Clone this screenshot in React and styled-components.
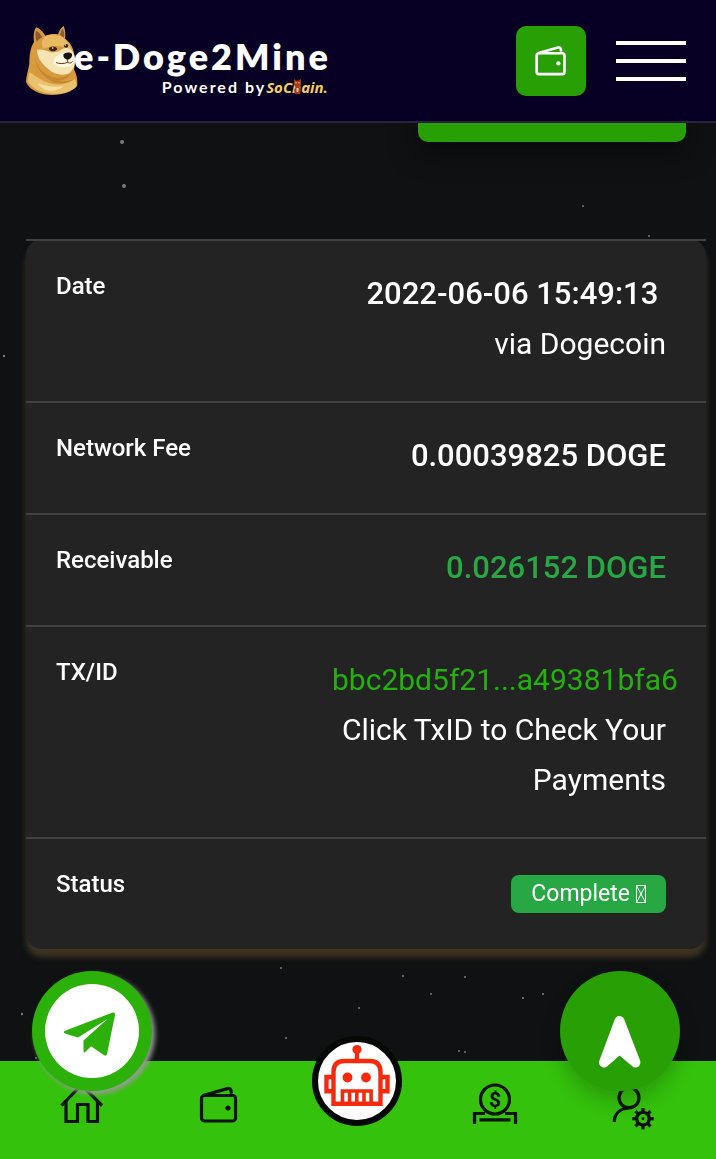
import styled, { createGlobalStyle, css } from 'styled-components';

const GlobalStyle = createGlobalStyle`
  * {
    box-sizing: border-box;
  }

  body {
    margin: 0;
    background-color: #0f1112;
    color: #fff;
    font-family: Roboto, "Open Sans", sans-serif;
  }

  button {
    border: 0;
    padding: 0;
    font: inherit;
    cursor: pointer;
  }
`;

const StarField = styled.svg`
  position: fixed;
  inset: 0;
  width: 100%;
  height: 100%;
  z-index: -1;
`;

const Header = styled.header`
  position: fixed;
  top: 0;
  left: 0;
  right: 0;
  height: 123px;
  padding: 0 30px 0 26px;
  display: flex;
  align-items: center;
  gap: 30px;
  background-color: #070024;
  border-bottom: 2px solid #28223f;
  z-index: 40;
`;

const Brand = styled.a`
  display: flex;
  align-items: center;
  margin-right: auto;
  color: #fff;
  text-decoration: none;
`;

const DogeHead = styled.svg`
  width: 52px;
  height: 70px;
`;

const Wordmark = styled.span`
  display: flex;
  flex-direction: column;
  align-items: flex-end;
  margin-left: -4px;
  padding-top: 10px;
  font-family: Lato, sans-serif;
  font-weight: 700;
`;

const BrandName = styled.span`
  font-size: 36px;
  line-height: 42px;
  font-weight: 800;
  letter-spacing: 3px;
`;

const Tagline = styled.span`
  display: flex;
  padding-right: 3px;
  font-size: 16px;
  line-height: 20px;
  letter-spacing: 2px;
`;

const Partner = styled.span`
  position: relative;
  color: #f0d060;
  font-family: "Open Sans", sans-serif;
  font-size: 15px;
  font-style: italic;
  letter-spacing: 0;
`;

const PartnerCat = styled.svg`
  position: absolute;
  left: 27px;
  top: 1px;
  width: 9px;
  height: 17px;
`;

const WalletButton = styled.button`
  width: 70px;
  height: 70px;
  display: flex;
  align-items: center;
  justify-content: center;
  border-radius: 10px;
  background-color: #28a005;
  color: #fff;
`;

const MenuButton = styled.button`
  width: 70px;
  display: flex;
  flex-direction: column;
  gap: 14px;
  background: none;
`;

const MenuBar = styled.span`
  height: 4px;
  background-color: #fff;
`;

const Main = styled.main`
  padding: 76px 10px 210px 26px;
  display: flex;
  flex-direction: column;
`;

const ActionButton = styled.button`
  align-self: flex-end;
  width: 268px;
  height: 66px;
  margin: 0 20px 97px 0;
  border-radius: 10px;
  background-color: #28a005;
  box-shadow: 0 10px 30px rgba(0, 0, 0, 0.4);
`;

const Table = styled.table`
  width: 100%;
  table-layout: fixed;
  border-spacing: 0;
  border-radius: 16px;
  background-color: #232323;
  box-shadow: 0 8px 6px #3f3524;
`;

const Label = styled.th`
  width: 45%;
  padding: 30px;
  border-top: 2px solid #3f4142;
  vertical-align: top;
  text-align: left;
  font-size: 24px;
  line-height: 30px;
  font-weight: 500;
`;

const Value = styled.td`
  padding: 28px 40px 32px 0;
  border-top: 2px solid #3f4142;
  vertical-align: top;
  text-align: right;
  font-size: 30px;
  line-height: 50px;
`;

const Amount = styled.strong`
  display: block;
  font-size: 31px;
  font-weight: 500;
  white-space: nowrap;
  color: ${({ $green }) => ($green ? '#28a745' : '#fff')};
`;

const Note = styled.div`
  font-weight: 400;
`;

const TxLink = styled.a`
  display: block;
  white-space: nowrap;
  text-align: left;
  color: #26b010;
  text-decoration: none;
`;

const BadgeRow = styled.div`
  display: flex;
  justify-content: flex-end;
  padding: 8px 0 4px;
`;

const Badge = styled.span`
  display: flex;
  align-items: center;
  gap: 6px;
  padding: 0 20px;
  border-radius: 8px;
  background-color: #28a745;
  font-size: 23px;
  line-height: 38px;
`;

const BottomNav = styled.nav`
  position: fixed;
  left: 0;
  right: 0;
  bottom: 0;
  height: 98px;
  padding: 0 14px 0 12px;
  display: grid;
  grid-template-columns: repeat(5, 1fr);
  justify-items: center;
  background-color: #34c20c;
  z-index: 30;
`;

const NavLink = styled.a`
  padding-top: 22px;
  color: #061204;
`;

const RobotLink = styled.a`
  width: 90px;
  height: 90px;
  margin-top: -25px;
`;

const floating = css`
  position: fixed;
  bottom: 68px;
  width: 120px;
  height: 120px;
  border-radius: 50%;
  z-index: 35;
`;

const TelegramLink = styled.a`
  ${floating}
  left: 32px;
  background-color: #2bb10a;
  box-shadow: 3px 3px 5px #999;
`;

const ScrollTop = styled.button`
  ${floating}
  right: 36px;
  background-color: #28a005;
  box-shadow: 0 10px 20px rgba(0, 0, 0, 0.2);
`;

const Icon = styled.svg.attrs({ fill: 'none', stroke: 'currentColor', strokeWidth: 3.2 })`
  display: block;
  overflow: visible;
  width: ${({ $size }) => $size || 44}px;
  height: ${({ $size }) => $size || 44}px;
`;

const stars = [
  [122, 142, 2], [124, 186, 2], [583, 206, 1], [649, 236, 1], [4, 356, 1.2],
  [281, 968, 1], [403, 976, 1], [465, 977, 1], [431, 994, 1], [523, 998, 1.1],
  [543, 994, 1.1], [359, 1008, 1], [22, 1014, 1.2], [286, 1038, 1.1],
  [459, 1051, 1], [465, 1052, 1], [36, 1058, 1],
];

const WalletIcon = ({ size }) => (
  <Icon $size={size} viewBox="-2 -3 44 44">
    <rect x="2.5" y="9.5" width="34" height="25.5" rx="3" />
    <path d="M4 9.5 28.5 2.6q3-.8 3.5 2l.4 3" />
    <circle cx="29" cy="22" r="2.6" fill="currentColor" stroke="none" />
  </Icon>
);

const HomeIcon = () => (
  <Icon viewBox="-1 2 44 44">
    <path d="M1.5 24.5 21.5 4l20.5 20.5" />
    <path d="M6 20v20.5h11.5v-17H28v17h9.5V20" />
  </Icon>
);

const DepositIcon = () => (
  <Icon viewBox="0 0 44 44">
    <circle cx="22" cy="16.5" r="14.5" />
    <path d="M12 30.5H1.5V41M32 30.5h10.5V41M6.5 36.8h31" />
    <text
      x="22"
      y="24"
      textAnchor="middle"
      fontSize="21"
      fontWeight="700"
      fill="currentColor"
      stroke="none"
    >
      $
    </text>
  </Icon>
);

const AccountIcon = () => (
  <Icon viewBox="-1 -2 44 44">
    <circle cx="17" cy="12.7" r="10" />
    <path d="M2.3 37C2.5 28.5 8 23.6 17 23" />
    <circle cx="31" cy="33.7" r="6.3" />
    <circle cx="31" cy="33.7" r="1.4" fill="currentColor" stroke="none" />
    {[0, 45, 90, 135, 180, 225, 270, 315].map((angle) => (
      <path key={angle} d="M31 27.5v-4.5" transform={`rotate(${angle} 31 33.7)`} />
    ))}
  </Icon>
);

const RobotIcon = () => (
  <Icon $size={90} viewBox="0 0 90 90">
    <circle cx="45" cy="45" r="42" fill="#fff" stroke="#050805" strokeWidth="6" />
    <g stroke="#f52a0c" strokeWidth="4.4">
      <path d="M45 15v9M21.5 67.700V36q0-11 11-11h25q11 0 11 11v31.700z" />
      <path d="M21.5 41h-7v14.300h7M68.5 41h7v14.300h-7" />
      <path d="M30.5 67.700V55h28.600v12.700M37.6 55v12.700M44.8 55v12.700M52 55v12.700" strokeWidth="3.6" />
    </g>
    <g fill="#f52a0c" stroke="none">
      <circle cx="45" cy="13.5" r="4.6" />
      <circle cx="35.5" cy="41.5" r="4.9" />
      <circle cx="54" cy="41.5" r="4.9" />
    </g>
  </Icon>
);

const Doge = () => (
  <DogeHead viewBox="78 78 156 210" aria-hidden="true">
    <path fill="#d79a3c" d="M102 126c-2-20 0-38 7-44 10 4 20 14 27 25 12-5 26-6 38-4 4-12 10-21 17-25 5 11 6 25 4 38 14 10 24 24 27 44 4 18 4 34 0 48 8 16 11 32 10 48-14 20-42 29-75 29-35 0-66-12-79-38 0-18 7-37 10-55 0-26 3-49 14-66z" />
    <path fill="#8d5a30" d="M108 92c7 3 14 11 19 20-7 4-13 8-17 13-4-12-5-25-2-33zM188 86c4 8 5 17 4 27-4-3-8-6-12-8 2-8 4-14 8-19z" />
    <path fill="#e9ba62" d="M136 108c24-8 48-4 62 12 8 9 14 18 17 30-22-11-48-18-84-4-9-13-6-28 5-38z" />
    <path fill="#f6e3b2" d="M111 149c16-2 29 3 42 8 14 2 28-4 38-12 15-3 27 4 32 20 6 20 0 42-14 54-19 10-48 5-64-12-18-14-34-34-34-58z" />
    <path fill="#fff6dc" d="M166 171c14-14 37-17 52-8 8 15 4 27-6 35-18 8-41 3-54-8z" />
    <path fill="#c58731" d="M104 160c0 32 18 56 42 67 22 11 47 8 67-7-7 17-27 23-45 22 20 5 36 2 56-6-16 15-45 18-66 9-28-14-55-41-54-85z" />
    <path fill="#e9c16f" d="M89 216c20 14 43 32 74 37 25 2 45-5 62-17 3 10 5 18 4 24-18 16-44 23-73 21-34-2-59-15-72-37 0-10 2-20 5-28z" />
    <path fill="#f7dfa1" d="M113 249c25 10 50 13 78 10-9 9-28 15-47 13-13-3-25-11-31-23z" />
    <path fill="#3a2414" d="M146 146c7-9 20-9 26 0-5 10-20 11-26 0zM191 137c4-6 11-7 14-1 0 8-9 11-14 1z" />
    <circle cx="158" cy="144" r="2.5" fill="#fff" />
    <circle cx="196" cy="135" r="2" fill="#fff" />
    <path fill="#17110f" d="M190 164c4-8 22-9 26-2 2 8-6 17-14 17-7-2-13-8-12-15z" />
    <path fill="none" stroke="#5b4026" strokeWidth="3" strokeLinecap="round" d="M203 178v9c-11 5-23 5-34 1M203 187c5 4 10 3 14-2" />
  </DogeHead>
);

const App = () => {
  return (
    <>
      <GlobalStyle />
      <StarField aria-hidden="true">
        {stars.map(([x, y, r]) => (
          <circle key={`${x}-${y}`} cx={x} cy={y} r={r} fill="#777b7e" />
        ))}
      </StarField>

      <Header>
        <Brand href="#home">
          <Doge />
          <Wordmark>
            <BrandName>e-Doge2Mine</BrandName>
            <Tagline>
              Powered by
              <Partner>
                SoChain.
                <PartnerCat viewBox="0 0 9 17" aria-hidden="true">
                  <path fill="#a83a1c" d="M1 1l2 1.5h3L8 1v6L6.5 9l1.5 3-1 4H2l-1-4 1.5-3L1 7z" />
                  <path fill="#f0c9a0" d="M2.5 4h1v1.5h-1zM5.5 4h1v1.5h-1zM3.5 10h2v4h-2z" />
                </PartnerCat>
              </Partner>
            </Tagline>
          </Wordmark>
        </Brand>
        <WalletButton aria-label="Wallet">
          <WalletIcon size={36} />
        </WalletButton>
        <MenuButton aria-label="Menu">
          <MenuBar />
          <MenuBar />
          <MenuBar />
        </MenuButton>
      </Header>

      <Main>
        <ActionButton aria-label="Withdraw" />
        <Table>
          <tbody>
            <tr>
              <Label scope="row">Date</Label>
              <Value>
                <Amount>2022-06-06 15:49:13&nbsp;</Amount>
                <Note>via Dogecoin</Note>
              </Value>
            </tr>
            <tr>
              <Label scope="row">Network Fee</Label>
              <Value>
                <Amount>0.00039825 DOGE</Amount>
              </Value>
            </tr>
            <tr>
              <Label scope="row">Receivable</Label>
              <Value>
                <Amount $green>0.026152 DOGE</Amount>
              </Value>
            </tr>
            <tr>
              <Label scope="row">TX/ID</Label>
              <Value>
                <TxLink href="#tx">bbc2bd5f21...a49381bfa6</TxLink>
                <Note>Click TxID to Check Your Payments</Note>
              </Value>
            </tr>
            <tr>
              <Label scope="row">Status</Label>
              <Value>
                <BadgeRow>
                  <Badge>
                    Complete
                    <svg width="10" height="18" fill="none" stroke="#fff" aria-hidden="true">
                      <path d="M.5.5h9v17h-9zl9 17M9.5.5l-9 17" />
                    </svg>
                  </Badge>
                </BadgeRow>
              </Value>
            </tr>
          </tbody>
        </Table>
      </Main>

      <TelegramLink href="#telegram" aria-label="Telegram">
        <Icon $size={120} viewBox="0 0 120 120">
          <circle cx="60" cy="60" r="47" fill="#fff" stroke="none" />
          <path
            fill="#2bb10a"
            stroke="none"
            d="M32.5 60 80 41.700q3.5-1 3 2.300L75 83q-.5 2.5-2.800 1.200L59 75.300l-5.5 5.5q-2 1.700-2-1V69.5L75.5 48 46 66.5l-13-4q-2-1-.5-2.5z"
          />
        </Icon>
      </TelegramLink>

      <ScrollTop aria-label="Back to top">
        <Icon $size={120} viewBox="0 0 120 120">
          <path
            d="M59.5 50 44 91.5 59.5 78 75.5 91.5z"
            fill="#fff"
            stroke="#fff"
            strokeWidth="10"
            strokeLinejoin="round"
          />
        </Icon>
      </ScrollTop>

      <BottomNav>
        <NavLink href="#home" aria-label="Home">
          <HomeIcon />
        </NavLink>
        <NavLink href="#wallet" aria-label="Wallet">
          <WalletIcon />
        </NavLink>
        <RobotLink href="#miner" aria-label="Miner">
          <RobotIcon />
        </RobotLink>
        <NavLink href="#deposit" aria-label="Deposit">
          <DepositIcon />
        </NavLink>
        <NavLink href="#account" aria-label="Account">
          <AccountIcon />
        </NavLink>
      </BottomNav>
    </>
  );
};

export default App;
